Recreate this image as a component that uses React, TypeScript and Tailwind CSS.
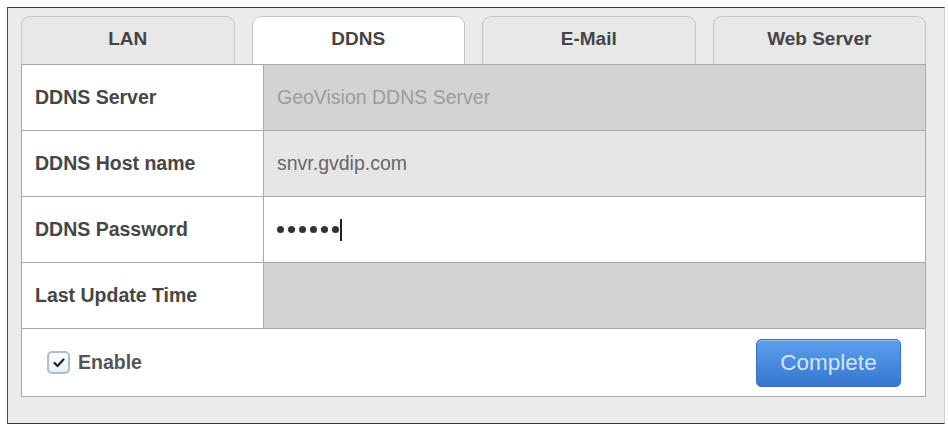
import { useState } from 'react';

type Row = {
  label: string;
  value?: string;
  kind: 'disabled' | 'text' | 'password' | 'empty';
};

const tabs = ['LAN', 'DDNS', 'E-Mail', 'Web Server'];

const rows: Row[] = [
  { label: 'DDNS Server', value: 'GeoVision DDNS Server', kind: 'disabled' },
  { label: 'DDNS Host name', value: 'snvr.gvdip.com', kind: 'text' },
  { label: 'DDNS Password', kind: 'password' },
  { label: 'Last Update Time', kind: 'empty' },
];

const cellBg = {
  disabled: 'bg-[#d3d3d3]',
  text: 'bg-[#e6e6e6]',
  password: 'bg-white',
  empty: 'bg-[#d3d3d3]',
};

export default function App() {
  const [activeTab, setActiveTab] = useState('DDNS');
  const [enabled, setEnabled] = useState(true);

  return (
    <div className="w-[948px] h-[426px] bg-white pt-[7px] pl-[7px] font-['Liberation_Sans',Arial,sans-serif]">
      <div className="w-[938px] h-[417px] bg-[#ebebeb] border-t border-l border-b border-t-[#3a3a3a] border-l-[#4a4a4a] border-b-[#3a3a3a] border-r border-r-[#d0d0d0] pt-[8px] pl-[13px]">
        {/* tab strip */}
        <div className="grid grid-cols-4 gap-[17px] w-[905px] h-[48px]">
          {tabs.map((tab) => (
            <button
              key={tab}
              onClick={() => setActiveTab(tab)}
              className={`rounded-t-[9px] border border-b-0 border-[#c4c4c4] text-[19px] font-bold text-[#444] pb-[2px] ${
                activeTab === tab ? 'bg-white' : 'bg-[#e8e8e8]'
              }`}
            >
              {tab}
            </button>
          ))}
        </div>

        {/* settings table */}
        <div className="w-[905px] border border-[#a9a9a9] bg-white">
          {rows.map((row) => (
            <div key={row.label} className="flex h-[66px] border-b border-[#a9a9a9]">
              <div className="w-[242px] shrink-0 flex items-center pl-[13px] border-r border-[#a9a9a9] text-[19.5px] font-bold text-[#464646]">
                {row.label}
              </div>
              <div className={`flex-1 flex items-center pl-[13px] text-[19.5px] ${cellBg[row.kind]}`}>
                {row.kind === 'disabled' && <span className="text-[#9c9c9c]">{row.value}</span>}
                {row.kind === 'text' && <span className="text-[#666]">{row.value}</span>}
                {row.kind === 'password' && (
                  <div className="flex items-center gap-[4px]">
                    {[0, 1, 2, 3, 4, 5].map((i) => (
                      <span key={i} className="w-[7px] h-[7px] rounded-full bg-[#333]" />
                    ))}
                    <span className="w-[1.5px] h-[22px] bg-[#222] -ml-[3px]" />
                  </div>
                )}
              </div>
            </div>
          ))}

          {/* footer */}
          <div className="flex items-center justify-between h-[67px] pl-[25px] pr-[24px]">
            <label className="flex items-center gap-[8px] cursor-pointer">
              <button
                onClick={() => setEnabled(!enabled)}
                className="w-[23px] h-[23px] rounded-[5px] border-2 border-[#a9bfd6] bg-gradient-to-b from-white to-[#e8eef5] flex items-center justify-center"
              >
                {enabled && (
                  <svg width="12" height="10" viewBox="0 0 12 10">
                    <path d="M1.5 5 L4.5 8 L10.5 1.5" fill="none" stroke="#222" strokeWidth="2.2" strokeLinecap="round" strokeLinejoin="round" />
                  </svg>
                )}
              </button>
              <span className="text-[19.5px] font-bold text-[#555]">Enable</span>
            </label>
            <button className="w-[145px] h-[48px] rounded-[5px] border border-[#3672c2] bg-gradient-to-b from-[#5a9fea] to-[#3777d2] text-[22.5px] text-[#d2e6fb] shadow-[inset_0_1px_0_rgba(255,255,255,0.3)]">
              Complete
            </button>
          </div>
        </div>
      </div>
    </div>
  );
}
